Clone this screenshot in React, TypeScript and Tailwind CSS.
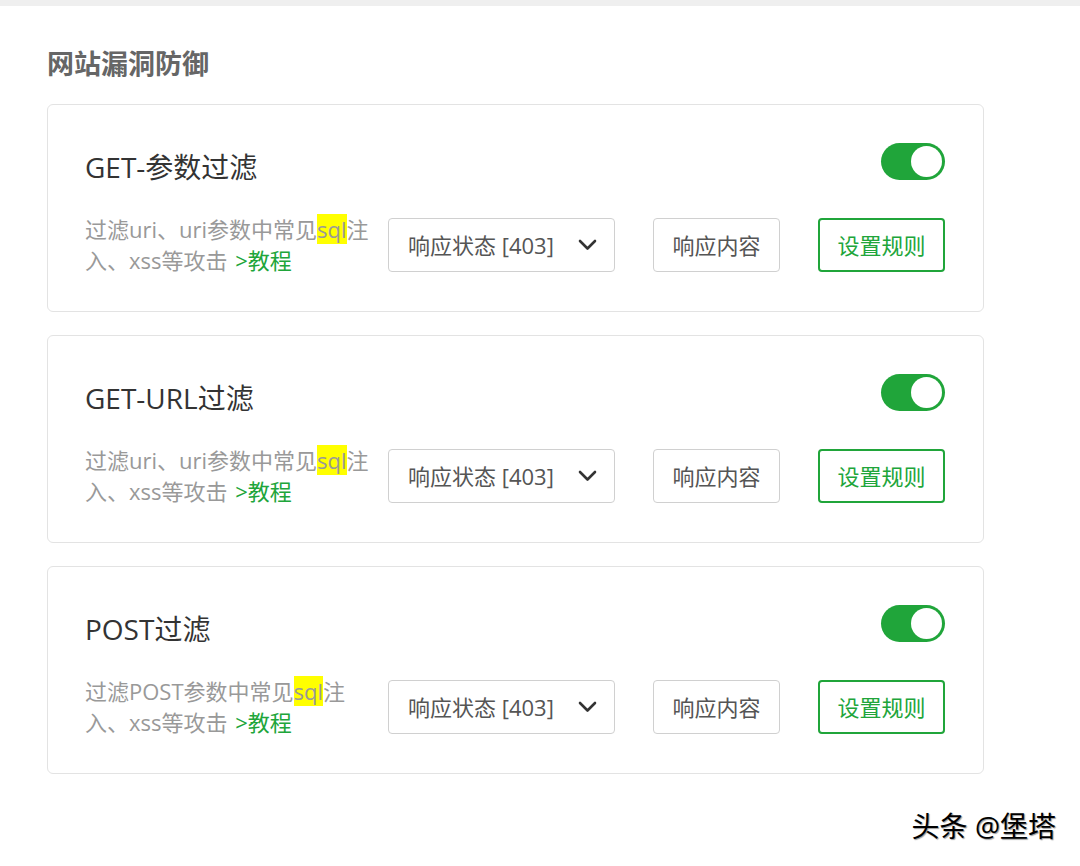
const font = { fontFamily: '"Open Sans", "Noto Sans CJK SC", sans-serif' }

type Rule = {
    title: string
    desc: string
}

const rules: Rule[] = [
    { title: 'GET-参数过滤', desc: '过滤uri、uri参数中常见' },
    { title: 'GET-URL过滤', desc: '过滤uri、uri参数中常见' },
    { title: 'POST过滤', desc: '过滤POST参数中常见' },
]

function Toggle() {
    return (
        <div className="flex h-[37px] w-[64px] items-center justify-end rounded-full bg-[#20a53a] px-[3px]">
            <div className="h-[31px] w-[31px] rounded-full bg-white" />
        </div>
    )
}

function RuleCard({ rule }: { rule: Rule }) {
    return (
        <div className="rounded-[6px] border border-[#e3e3e3] bg-white pb-[35px] pl-[37px] pr-[38px] pt-[38px]">
            <div className="flex h-[37px] items-start justify-between">
                <div className="mt-[6px] text-[28px] leading-[37px] text-[#333]">{rule.title}</div>
                <Toggle />
            </div>
            <div className="mt-[34px] flex items-center">
                <div className="w-[290px] text-[22px] leading-[31px] text-[#999]">
                    {rule.desc}
                    <span className="bg-[#ffff00]">sql</span>注入、xss等攻击{' '}
                    <a className="ml-[2px] text-[#20a53a]">&gt;教程</a>
                </div>
                <div className="ml-[13px] flex h-[54px] w-[227px] items-center justify-between rounded-[4px] border border-[#d0d0d0] pl-[19px] pr-[17px] text-[22px] text-[#555]">
                    <span>响应状态 [403]</span>
                    <svg width="19" height="12" viewBox="0 0 19 12" fill="none">
                        <path d="M2 2l7.5 7.5L17 2" stroke="#333" strokeWidth="2.6" strokeLinecap="round" strokeLinejoin="round" />
                    </svg>
                </div>
                <button className="ml-[38px] h-[54px] w-[127px] rounded-[4px] border border-[#d0d0d0] text-[22px] text-[#555]">
                    响应内容
                </button>
                <button className="ml-[38px] h-[54px] w-[127px] rounded-[4px] border-2 border-[#20a53a] text-[22px] text-[#20a53a]">
                    设置规则
                </button>
            </div>
        </div>
    )
}

export default function App() {
    return (
        <div className="relative min-h-[866px] w-[1080px] bg-white" style={font}>
            <div className="h-[6px] bg-[#efefef]" />
            <div className="pl-[47px] pr-[96px] pt-[39px]">
                <h2 className="text-[27px] font-bold leading-[38px] text-[#666]">网站漏洞防御</h2>
                <div className="mt-[21px] flex flex-col gap-[23px]">
                    {rules.map((r) => (
                        <RuleCard key={r.title} rule={r} />
                    ))}
                </div>
            </div>
            <div className="absolute right-[24px] top-[805px] text-[28px] text-black [text-shadow:1px_1px_1px_rgba(0,0,0,0.4)]">
                头条 @堡塔
            </div>
        </div>
    )
}
